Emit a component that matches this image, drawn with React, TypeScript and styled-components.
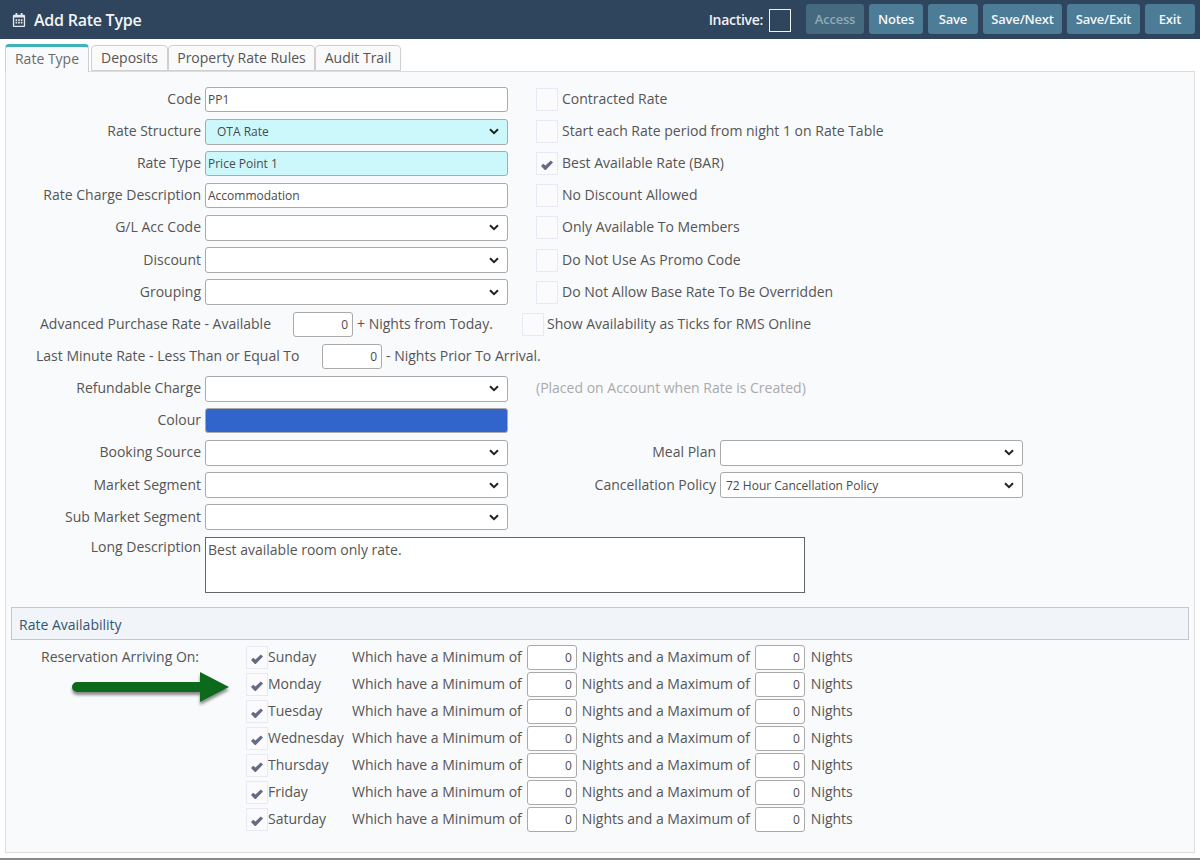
import React from 'react';
import styled, { createGlobalStyle } from 'styled-components';
import { FaRegCalendarAlt } from 'react-icons/fa';

const GlobalStyle = createGlobalStyle`
  html, body {
    margin: 0;
    padding: 0;
    background: #fff;
    font-family: "Open Sans", "Noto Sans", sans-serif;
    font-size: 14px;
    color: #555;
  }
  * { box-sizing: border-box; }
`;

const chevron =
  "url(\"data:image/svg+xml,%3Csvg xmlns='http://www.w3.org/2000/svg' width='10' height='7' viewBox='0 0 10 7'%3E%3Cpath d='M1 1.2 L5 5.2 L9 1.2' fill='none' stroke='%23222' stroke-width='2'/%3E%3C/svg%3E\")";

const Page = styled.div`
  position: relative;
  width: 1200px;
  height: 860px;
  overflow: hidden;
  border-bottom: 2px solid #8a8a8a;
`;

const Header = styled.header`
  height: 39px;
  background: #2e455d;
  display: flex;
  align-items: center;
  padding: 0 5px 0 12px;
`;

const Title = styled.h1`
  margin: 0 0 0 8px;
  font-size: 16px;
  font-weight: 600;
  color: #f2f4f6;
  flex: 1;
  letter-spacing: -0.25px;
`;

const InactiveLabel = styled.span`
  color: #f0f2f4;
  font-size: 14px;
  font-weight: 600;
  letter-spacing: -0.3px;
  margin-right: 6px;
`;

const InactiveBox = styled.span`
  width: 22px;
  height: 23px;
  border: 1px solid #f0f2f4;
  margin-right: 15px;
  margin-top: 1px;
`;

const ToolButton = styled.button<{ $w: number; $off?: boolean }>`
  width: ${p => p.$w}px;
  height: 30px;
  margin-left: 5px;
  margin-top: -1px;
  border: 0;
  border-radius: 3px;
  background: ${p => (p.$off ? '#456a80' : '#4d7c96')};
  color: ${p => (p.$off ? '#93a8b5' : '#f4f6f8')};
  font-family: "Open Sans", sans-serif;
  font-size: 13px;
  font-weight: 600;
  letter-spacing: -0.2px;
  padding: 0;
  &:first-of-type { margin-left: 0; }
`;

const TabBar = styled.div`
  display: flex;
  align-items: flex-start;
  height: 33px;
  padding: 5px 0 0 5px;
`;

const Tab = styled.div<{ $active?: boolean; $w: number }>`
  position: relative;
  z-index: 1;
  width: ${p => p.$w}px;
  height: ${p => (p.$active ? 28 : 26)}px;
  margin-top: ${p => (p.$active ? 0 : 1)}px;
  margin-right: ${p => (p.$active ? 2 : 0)}px;
  border: 1px solid #cfcfcf;
  border-top: ${p => (p.$active ? '3px solid #3fb2bc' : '1px solid #cfcfcf')};
  border-bottom: ${p => (p.$active ? '0' : '1px solid #cfcfcf')};
  border-radius: 4px 4px 0 0;
  background: ${p => (p.$active ? '#f9fafc' : '#fafafa')};
  color: ${p => (p.$active ? '#6a6a6a' : '#555')};
  text-align: center;
  line-height: ${p => (p.$active ? 24 : 23)}px;
`;

const Panel = styled.main`
  margin: -1px 5px 0;
  height: 782px;
  border: 1px solid #dcdcdc;
  background: #f9fafc;
  padding-top: 11.3px;
`;

const Row = styled.div`
  display: flex;
  align-items: center;
  height: 32.15px;
`;

const Label = styled.label`
  width: 195px;
  margin-right: 4px;
  padding-bottom: 2px;
  text-align: right;
  white-space: nowrap;
`;

const SideLabel = styled(Label)`
  width: 175px;
  margin-left: 33px;
`;

const textBox = `
  height: 25px;
  border: 1px solid #aaa;
  border-radius: 3px;
  background-color: #fff;
  font-family: "Open Sans", sans-serif;
  font-size: 12px;
  color: #4a4a4a;
`;

const TextInput = styled.input<{ $tint?: boolean }>`
  ${textBox}
  width: 303px;
  padding: 0 2px;
  background-color: ${p => (p.$tint ? '#ccf8fc' : '#fff')};
`;

const Select = styled.select<{ $tint?: boolean; $indent?: number }>`
  ${textBox}
  appearance: none;
  width: 303px;
  height: 26px;
  padding: 0 24px 0 ${p => p.$indent ?? 5}px;
  background-color: ${p => (p.$tint ? '#ccf8fc' : '#fff')};
  background-image: ${chevron};
  background-repeat: no-repeat;
  background-position: right 8px center;
`;

const ColourBar = styled.div`
  width: 303px;
  height: 25px;
  border: 1px solid #aaa;
  border-radius: 3px;
  background: #3165cc;
`;

const BoxWrap = styled.span<{ $gap?: number }>`
  width: 22px;
  height: 23px;
  flex: none;
  display: flex;
  align-items: center;
  justify-content: center;
  border: 1px solid #e8e9f5;
  background: #fbfbfe;
  padding-top: 3px;
  margin-left: ${p => p.$gap ?? 0}px;
`;

const CheckText = styled.span<{ $gap?: number }>`
  margin-left: ${p => p.$gap ?? 4}px;
  padding-bottom: 2px;
  white-space: nowrap;
`;

const NumberInput = styled.input`
  ${textBox}
  width: 60px;
  height: 25px;
  text-align: right;
  padding: 0 4px;
`;

const PlainText = styled.span<{ $left?: number; $w?: number }>`
  margin-left: ${p => p.$left ?? 0}px;
  ${p => (p.$w ? `width: ${p.$w}px;` : '')}
  padding-bottom: 2px;
  white-space: nowrap;
`;

const InlineLabel = styled.label<{ $left: number; $w: number }>`
  margin-left: ${p => p.$left}px;
  width: ${p => p.$w}px;
  padding-bottom: 2px;
  white-space: nowrap;
`;

const Hint = styled.span`
  margin-left: 28px;
  padding-bottom: 2px;
  color: #aaa;
`;

const TextArea = styled.textarea`
  width: 600px;
  height: 56px;
  border: 1px solid #666;
  background: #fff;
  padding: 2px;
  resize: none;
  font-family: "Open Sans", sans-serif;
  font-size: 14px;
  color: #555;
`;

const DescRow = styled.div`
  display: flex;
  align-items: flex-start;
  margin-top: 3.4px;
`;

const SectionBar = styled.div`
  margin: 14px 5px 0;
  height: 33px;
  border: 1px solid #c3c8d0;
  background: #f1f4f9;
  padding-left: 7px;
  line-height: 34px;
  color: #33566f;
`;

const Availability = styled.div`
  display: flex;
  padding: 4px 0 0 35px;
`;

const ArrivingLabel = styled.div`
  width: 205px;
  line-height: 25px;
  height: 27px;
`;

const DayRow = styled.div`
  display: flex;
  align-items: center;
  height: 27px;
`;

const DayName = styled.span`
  width: 84px;
  padding-bottom: 2px;
  white-space: nowrap;
`;

const DayInput = styled(NumberInput)`
  width: 50px;
  height: 25px;
  margin: 0 5px;
`;

const Arrow = styled.svg`
  position: absolute;
  left: 68px;
  top: 668px;
`;

const Tick = styled.svg`
  display: block;
`;

const rows: { label: string; field: React.ReactNode; check: string; on?: boolean }[] = [
  { label: 'Code', field: <TextInput defaultValue="PP1" />, check: 'Contracted Rate' },
  {
    label: 'Rate Structure',
    field: (
      <Select $tint $indent={11} defaultValue="OTA Rate">
        <option>OTA Rate</option>
      </Select>
    ),
    check: 'Start each Rate period from night 1 on Rate Table',
  },
  { label: 'Rate Type', field: <TextInput $tint defaultValue="Price Point 1" />, check: 'Best Available Rate (BAR)', on: true },
  { label: 'Rate Charge Description', field: <TextInput defaultValue="Accommodation" />, check: 'No Discount Allowed' },
  { label: 'G/L Acc Code', field: <Select />, check: 'Only Available To Members' },
  { label: 'Discount', field: <Select />, check: 'Do Not Use As Promo Code' },
  { label: 'Grouping', field: <Select />, check: 'Do Not Allow Base Rate To Be Overridden' },
];

const days = ['Sunday', 'Monday', 'Tuesday', 'Wednesday', 'Thursday', 'Friday', 'Saturday'];

const CheckBox: React.FC<{ on?: boolean; gap?: number }> = ({ on, gap }) => (
  <BoxWrap $gap={gap}>
    {on && (
      <Tick width="12" height="10" viewBox="0 0 12 10">
        <path d="M0 6 L2.2 3.8 L4.4 5.6 L9.8 0.4 L12 2.4 L4.8 10 L3.8 10 Z" fill="#666a85" />
      </Tick>
    )}
  </BoxWrap>
);

const App: React.FC = () => {
  return (
    <Page>
      <GlobalStyle />
      <Header>
        <FaRegCalendarAlt color="#e6e9ec" size={14} />
        <Title>Add Rate Type</Title>
        <InactiveLabel>Inactive:</InactiveLabel>
        <InactiveBox />
        <ToolButton $w={58} $off>Access</ToolButton>
        <ToolButton $w={54}>Notes</ToolButton>
        <ToolButton $w={50}>Save</ToolButton>
        <ToolButton $w={79}>Save/Next</ToolButton>
        <ToolButton $w={73}>Save/Exit</ToolButton>
        <ToolButton $w={50}>Exit</ToolButton>
      </Header>

      <TabBar>
        <Tab $active $w={84}>Rate Type</Tab>
        <Tab $w={77}>Deposits</Tab>
        <Tab $w={147}>Property Rate Rules</Tab>
        <Tab $w={86}>Audit Trail</Tab>
      </TabBar>

      <Panel>
        {rows.map(r => (
          <Row key={r.label}>
            <Label>{r.label}</Label>
            {r.field}
            <CheckBox on={r.on} gap={28} />
            <CheckText>{r.check}</CheckText>
          </Row>
        ))}

        <Row>
          <InlineLabel $left={34} $w={253}>Advanced Purchase Rate - Available</InlineLabel>
          <NumberInput defaultValue="0" />
          <PlainText $left={4} $w={165}>+ Nights from Today.</PlainText>
          <CheckBox />
          <CheckText $gap={3}>Show Availability as Ticks for RMS Online</CheckText>
        </Row>
        <Row>
          <InlineLabel $left={30} $w={286}>Last Minute Rate - Less Than or Equal To</InlineLabel>
          <NumberInput defaultValue="0" />
          <PlainText $left={4}>- Nights Prior To Arrival.</PlainText>
        </Row>

        <Row>
          <Label>Refundable Charge</Label>
          <Select />
          <Hint>(Placed on Account when Rate is Created)</Hint>
        </Row>
        <Row>
          <Label>Colour</Label>
          <ColourBar />
        </Row>
        <Row>
          <Label>Booking Source</Label>
          <Select />
          <SideLabel>Meal Plan</SideLabel>
          <Select />
        </Row>
        <Row>
          <Label>Market Segment</Label>
          <Select />
          <SideLabel>Cancellation Policy</SideLabel>
          <Select defaultValue="72 Hour Cancellation Policy">
            <option>72 Hour Cancellation Policy</option>
          </Select>
        </Row>
        <Row>
          <Label>Sub Market Segment</Label>
          <Select />
        </Row>

        <DescRow>
          <Label>Long Description</Label>
          <TextArea defaultValue="Best available room only rate." />
        </DescRow>

        <SectionBar>Rate Availability</SectionBar>

        <Availability>
          <ArrivingLabel>Reservation Arriving On:</ArrivingLabel>
          <div>
            {days.map(d => (
              <DayRow key={d}>
                <CheckBox on />
                <DayName>{d}</DayName>
                <PlainText>Which have a Minimum of</PlainText>
                <DayInput defaultValue="0" />
                <PlainText>Nights and a Maximum of</PlainText>
                <DayInput defaultValue="0" />
                <PlainText $left={1}>Nights</PlainText>
              </DayRow>
            ))}
          </div>
        </Availability>
      </Panel>

      <Arrow width="170" height="42" viewBox="0 0 170 42">
        <defs>
          <filter id="arrowShadow" x="-10%" y="-30%" width="120%" height="180%">
            <feDropShadow dx="0" dy="3" stdDeviation="1.8" floodColor="#000" floodOpacity="0.45" />
          </filter>
        </defs>
        <path
          d="M9 14 H132 V4 L161 19 L132 34 V24 H9 A5 5 0 0 1 9 14 Z"
          fill="#0f6a1f"
          filter="url(#arrowShadow)"
        />
      </Arrow>
    </Page>
  );
};

export default App;
